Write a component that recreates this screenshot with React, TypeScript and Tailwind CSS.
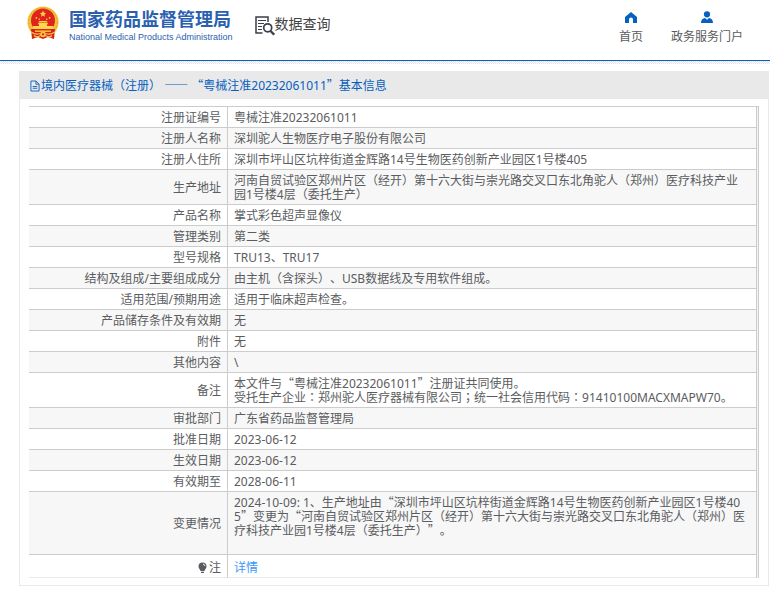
import type { ReactNode } from "react";

/* Quotes take the full-width CJK form; colons and semicolons sit centred in their cell. */
function Zh({ text }: { text: string }) {
  return (
    <>
      {text.split(/([“”]|—+|[：；])/).map((part, i) => {
        if (/^[“”—]/.test(part))
          return (
            <span key={i} className="font-['Noto_Sans_CJK_SC',sans-serif] leading-none">
              {part}
            </span>
          );
        if (/^[：；]/.test(part))
          return (
            <span key={i} lang="zh-TW" className="font-['Noto_Sans_CJK_TC',sans-serif] leading-none">
              {part}
            </span>
          );
        return part;
      })}
    </>
  );
}

const rows: { label: string; lines: string[] }[] = [
  { label: "注册证编号", lines: ["粤械注准20232061011"] },
  { label: "注册人名称", lines: ["深圳驼人生物医疗电子股份有限公司"] },
  { label: "注册人住所", lines: ["深圳市坪山区坑梓街道金辉路14号生物医药创新产业园区1号楼405"] },
  {
    label: "生产地址",
    lines: ["河南自贸试验区郑州片区（经开）第十六大街与崇光路交叉口东北角驼人（郑州）医疗科技产业园1号楼4层（委托生产）"],
  },
  { label: "产品名称", lines: ["掌式彩色超声显像仪"] },
  { label: "管理类别", lines: ["第二类"] },
  { label: "型号规格", lines: ["TRU13、TRU17"] },
  { label: "结构及组成/主要组成成分", lines: ["由主机（含探头）、USB数据线及专用软件组成。"] },
  { label: "适用范围/预期用途", lines: ["适用于临床超声检查。"] },
  { label: "产品储存条件及有效期", lines: ["无"] },
  { label: "附件", lines: ["无"] },
  { label: "其他内容", lines: ["\\"] },
  {
    label: "备注",
    lines: [
      "本文件与“粤械注准20232061011”注册证共同使用。",
      "受托生产企业：郑州驼人医疗器械有限公司；统一社会信用代码：91410100MACXMAPW70。",
    ],
  },
  { label: "审批部门", lines: ["广东省药品监督管理局"] },
  { label: "批准日期", lines: ["2023-06-12"] },
  { label: "生效日期", lines: ["2023-06-12"] },
  { label: "有效期至", lines: ["2028-06-11"] },
  {
    label: "变更情况",
    lines: [
      "2024-10-09: 1、生产地址由“深圳市坪山区坑梓街道金辉路14号生物医药创新产业园区1号楼405”变更为“河南自贸试验区郑州片区（经开）第十六大街与崇光路交叉口东北角驼人（郑州）医疗科技产业园1号楼4层（委托生产）”。",
      "\u00a0",
    ],
  },
];

function Emblem() {
  return (
    <svg viewBox="0 0 32 34" className="h-[34px] w-8 shrink-0" aria-hidden="true">
      <circle cx="16" cy="16" r="15.6" fill="#f3c33c" />
      <circle cx="16" cy="16" r="14.2" fill="none" stroke="#e0a52f" strokeWidth="1" strokeDasharray="2 1.5" />
      <path d="M4 23 5 33 11 31 16 33 21 31 27 33 28 23Z" fill="#d8211d" />
      <circle cx="16" cy="14.6" r="12" fill="#e0231d" />
      <path d="m16 4.6.9 2.2 2.3.1-1.8 1.5.6 2.3-2-1.3-2 1.3.6-2.3-1.8-1.5 2.3-.1z" fill="#ffd84a" />
      <g fill="#ffd84a">
        <circle cx="9.4" cy="11.8" r=".9" />
        <circle cx="12.3" cy="13.2" r=".8" />
        <circle cx="19.7" cy="13.2" r=".8" />
        <circle cx="22.6" cy="11.8" r=".9" />
        <path d="M11 16.2 12.5 15h7l1.5 1.2zM10.5 18.2 12 16.8h8l1.5 1.4zM12 18h8v2h-8zM6 20h20v3H6z" />
        <path d="M8 24.5h16v1.3H8z" />
      </g>
      <path d="M4 26c3 2 7 2.5 9 1.5M28 26c-3 2-7 2.5-9 1.5M7 29.5c2 2 5 1 6.5 0M25 29.5c-2 2-5 1-6.5 0" stroke="#f6c63e" strokeWidth="1.3" fill="none" />
      <circle cx="16" cy="28.3" r="2.9" fill="#f6c63e" />
      <circle cx="16" cy="28.3" r="1.1" fill="#d8211d" />
    </svg>
  );
}

function SearchDoc() {
  return (
    <svg viewBox="0 0 20 20" className="h-5 w-5 shrink-0" fill="none" stroke="#3d3d4d" aria-hidden="true">
      <path d="M7.5 17H1V1h12v5" strokeWidth="1.5" />
      <path d="M3 4.5h8M3 7.5h6M3 10.5h4M3 13.5h4" strokeWidth="1.2" />
      <circle cx="12.7" cy="11.8" r="4" strokeWidth="1.7" />
      <path d="m15.5 15 3.7 3.7" strokeWidth="2.3" />
    </svg>
  );
}

function NavLink({ icon, children }: { icon: ReactNode; children: ReactNode }) {
  return (
    <a href="#" className="flex flex-col items-center gap-1 leading-[18px]">
      {icon}
      <span>{children}</span>
    </a>
  );
}

export default function App() {
  return (
    <div
      lang="zh-CN"
      className="bg-white font-['Noto_Sans','Noto_Sans_CJK_SC',sans-serif] text-xs text-[#5a5c60] [text-spacing-trim:space-all]"
    >
      <header>
        <div className="flex h-15 items-start justify-between px-[27px]">
          <div className="flex items-start pt-1.5">
            <Emblem />
            <div className="ml-2.5 text-[#2b5fb0]">
              <h1 className="font-['Noto_Sans_CJK_SC',sans-serif] text-lg leading-[25px] font-bold">国家药品监督管理局</h1>
              <p className="font-['Liberation_Sans',sans-serif] text-[9px] leading-3">
                National Medical Products Administration
              </p>
            </div>
            <div className="mt-2 ml-[22px] flex items-start">
              <span className="pt-0.5">
                <SearchDoc />
              </span>
              <span className="text-sm leading-5 text-[#444]">数据查询</span>
            </div>
          </div>
          <nav className="flex gap-7 pt-2.5">
            <NavLink
              icon={
                <svg viewBox="0 0 14 14" className="h-3.5 w-3.5" fill="#0660bf" aria-hidden="true">
                  <path d="M7 2 13 7v6H9V9.500a2 2 0 0 0-4 0V13H1V7z" />
                </svg>
              }
            >
              首页
            </NavLink>
            <NavLink
              icon={
                <svg viewBox="0 0 14 14" className="h-3.5 w-3.5" fill="#0660bf" aria-hidden="true">
                  <circle cx="7" cy="4.3" r="3.1" />
                  <path d="M1 13c0-3 1.500-4.500 4-5l2 1.700L9 8c2.500.5 4 2 4 5z" />
                </svg>
              }
            >
              政务服务门户
            </NavLink>
          </nav>
        </div>
        <div className="h-px bg-[#0660bf]" />
        <div className="h-[3px] bg-[conic-gradient(#e3e3e3_25%,#fff_25%_50%,#e3e3e3_50%_75%,#fff_75%)] bg-[length:2px_2px]" />
      </header>

      <main className="mt-[7px] mr-px ml-[19px] border border-t-0 border-[#e9e9e9] pb-[7px]">
        <h2 className="flex h-7 items-center bg-[#e9e9e9] pt-0.5 pl-2.5 text-[#0660bf]">
          <svg viewBox="0 0 11 12" className="mr-px h-3 w-2.5" fill="none" stroke="#0660bf" aria-hidden="true">
            <path d="M1 .5h5.500l3.500 3.500v7.500H1zM6.500.5V4H10M3 6.500h5M3 8.500h5" />
          </svg>
          <span className="whitespace-pre leading-5">
            <Zh text="境内医疗器械（注册） —— “粤械注准20232061011”基本信息" />
          </span>
        </h2>
        <div className="mx-[9px] mt-[7px] border-t border-r border-[#ccc] bg-[#f3f3f3] pr-px">
          <table className="w-full border-separate border-spacing-0 border-r border-[#ccc] bg-white leading-[14px]">
            <tbody>
              {rows.map((row) => (
                <tr key={row.label} className="even:bg-[#f7f7f7]">
                  <th scope="row" className="w-[199px] border-r border-b border-[#ccc] px-1.5 pt-1 pb-0.5 text-right font-normal">
                    {row.label}
                  </th>
                  <td className="border-b border-[#ccc] pt-1 pr-2.5 pb-0.5 pl-1.5 break-all">
                    {row.lines.map((line, i) => (
                      <div key={i}>
                        <Zh text={line} />
                      </div>
                    ))}
                  </td>
                </tr>
              ))}
              <tr>
                <th scope="row" className="border-r border-b border-[#ccc] border-b-[#e9e9e9] px-1.5 pt-1.5 pb-0.5 font-normal">
                  <div className="flex h-3.5 items-center justify-end gap-0.5">
                    <svg viewBox="0 0 9 12" className="h-3 w-[9px]" fill="#5a5c60" aria-hidden="true">
                      <path d="M4.5.5a4 4 0 0 1 4 4c0 2-1.500 2.700-2 4.500h-4C2 7.200.5 6.500.5 4.500a4 4 0 0 1 4-4zM3 9.700h3v1.300H3z" />
                      <path d="M5 2c1 .2 1.700.9 1.900 1.900" stroke="#fff" fill="none" />
                    </svg>
                    注
                  </div>
                </th>
                <td className="border-b border-[#e9e9e9] pt-1.5 pr-2.5 pb-0.5 pl-1.5">
                  <a href="#" className="text-[#3c97f8]">
                    详情
                  </a>
                </td>
              </tr>
            </tbody>
          </table>
        </div>
      </main>
    </div>
  );
}
